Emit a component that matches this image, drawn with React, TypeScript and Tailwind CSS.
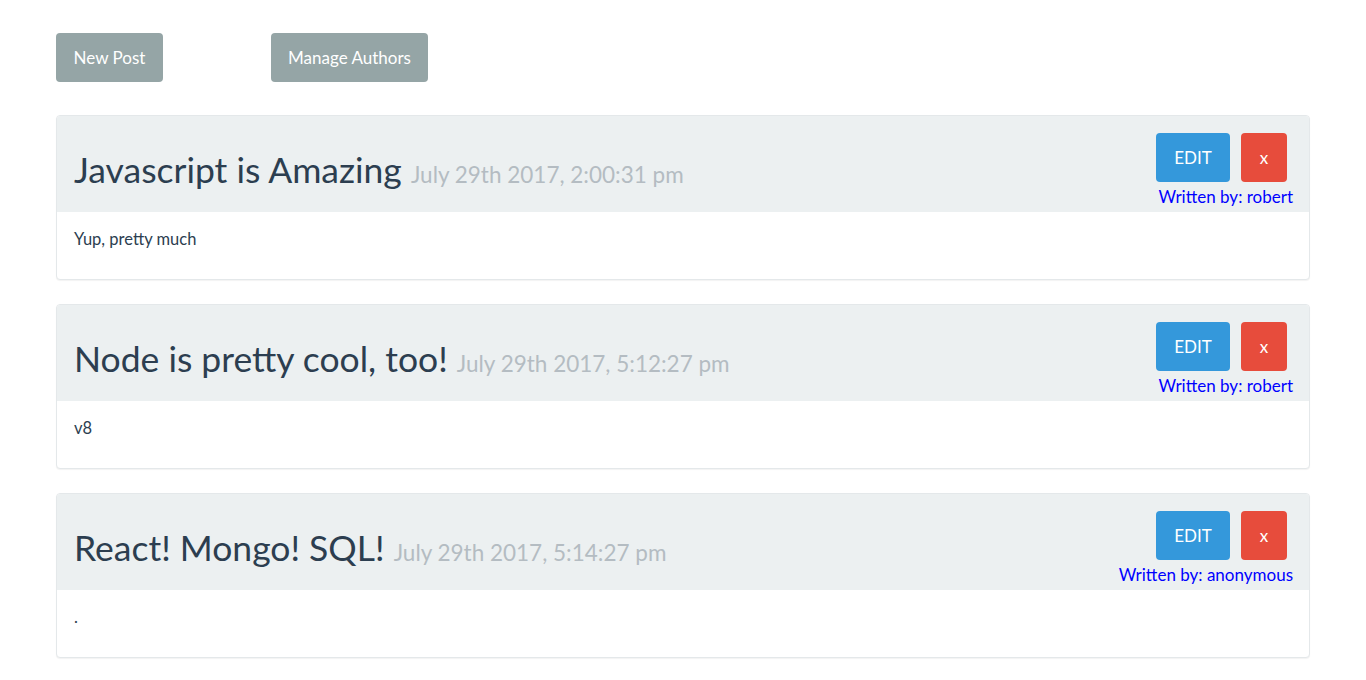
const posts = [
  { title: "Javascript is Amazing", date: "July 29th 2017, 2:00:31 pm", author: "robert", body: "Yup, pretty much" },
  { title: "Node is pretty cool, too!", date: "July 29th 2017, 5:12:27 pm", author: "robert", body: "v8" },
  { title: "React! Mongo! SQL!", date: "July 29th 2017, 5:14:27 pm", author: "anonymous", body: "." },
];

function PostPanel({ post }: { post: (typeof posts)[number] }) {
  return (
    <div className="mb-[24px] overflow-hidden rounded-[4px] border border-[#e4e8ea] bg-white shadow-[0_1px_1px_rgba(0,0,0,0.05)]">
      {/* Heading */}
      <div className="flex h-[96px] justify-between bg-[#ecf0f1] pl-[17px] pr-[16px]">
        <h2 className="mt-[34px] leading-[1.1] whitespace-nowrap text-[35.5px] text-[#2c3e50]">
          {post.title}{" "}
          <small className="text-[22.5px] text-[#b4bcc2]">{post.date}</small>
        </h2>
        <div className="flex flex-col items-end pt-[17px]">
          <div className="mr-[6px] flex gap-[11px]">
            <button className="h-[49px] w-[74px] rounded-[4px] bg-[#3498db] text-[17px] text-white">
              EDIT
            </button>
            <button className="h-[49px] w-[46px] rounded-[4px] bg-[#e74c3c] text-[17px] text-white">
              x
            </button>
          </div>
          <span className="mt-[5px] text-[17px] leading-[20px] text-[#0000ff]">Written by: {post.author}</span>
        </div>
      </div>
      {/* Body */}
      <div className="h-[67px] px-[17px] pt-[17px] text-[16.5px] leading-[21px] text-[#2c3e50]">{post.body}</div>
    </div>
  );
}

export default function App() {
  return (
    <div className="min-h-screen bg-white px-[56px] pt-[33px] font-['Lato',sans-serif]">
      <div className="mb-[33px] flex">
        <button className="h-[49px] w-[107px] rounded-[4px] bg-[#95a5a6] text-[17px] text-white">
          New Post
        </button>
        <button className="ml-[108px] h-[49px] w-[157px] rounded-[4px] bg-[#95a5a6] text-[17px] text-white">
          Manage Authors
        </button>
      </div>
      {posts.map((p) => (
        <PostPanel key={p.title} post={p} />
      ))}
    </div>
  );
}
